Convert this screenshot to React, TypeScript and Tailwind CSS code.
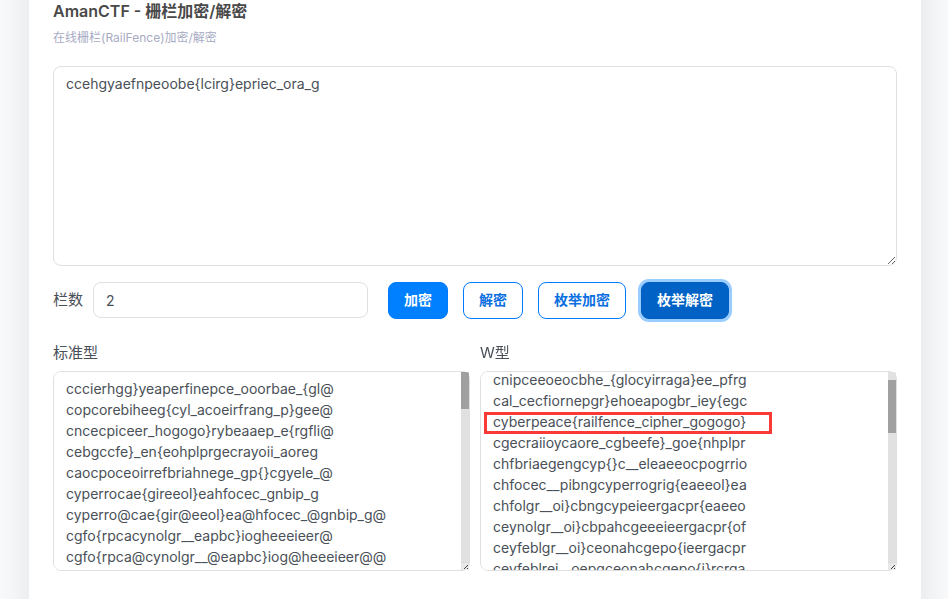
import { useLayoutEffect, useRef, useState } from "react";

const SOURCE = "ccehgyaefnpeoobe{lcirg}epriec_ora_g";

/** Standard rail fence: the text is cut into equal rails and read by column. */
function decodeStandard(text: string, rails: number): string {
  const columns = Math.ceil(text.length / rails);
  const padded = text.padEnd(columns * rails, "@");
  let out = "";
  for (let c = 0; c < columns; c++) {
    for (let r = 0; r < rails; r++) out += padded[r * columns + c];
  }
  return out;
}

/** W-shaped rail fence: the text zigzags between the first and last rail. */
function decodeZigzag(text: string, rails: number): string {
  const period = 2 * (rails - 1);
  const order: number[] = [];
  for (let r = 0; r < rails; r++) {
    for (let i = 0; i < text.length; i++) {
      const m = i % period;
      if (Math.min(m, period - m) === r) order.push(i);
    }
  }
  const out: string[] = [];
  order.forEach((position, i) => {
    out[position] = text[i];
  });
  return out.join("");
}

function enumerate(decode: (text: string, rails: number) => string): string {
  const lines: string[] = [];
  for (let rails = 2; rails < SOURCE.length; rails++) lines.push(decode(SOURCE, rails));
  return lines.join("\n");
}

const fieldClass =
  "block w-full rounded-lg border border-[#e0e0e0] bg-white px-3 text-sm leading-[21px] text-[#495057] outline-none";

const buttonClass = "h-[37px] rounded-lg border px-[15px] pb-0.5 text-sm font-bold";
const outlineButton = `${buttonClass} border-[#007bff] bg-white text-[#0a6fe0]`;

function ResultArea({ id, label, value, scroll = 0 }: { id: string; label: string; value: string; scroll?: number }) {
  const ref = useRef<HTMLTextAreaElement>(null);
  const [thumb, setThumb] = useState({ top: 0, height: 0 });

  const measure = () => {
    const area = ref.current;
    if (!area) return;
    const track = area.clientHeight - 8;
    setThumb({
      top: Math.round((track * area.scrollTop) / area.scrollHeight),
      height: Math.round((track * area.clientHeight) / area.scrollHeight),
    });
  };

  useLayoutEffect(() => {
    if (ref.current) ref.current.scrollTop = scroll;
    measure();
  }, [scroll]);

  return (
    <div className="min-w-0 flex-1">
      <label htmlFor={id} className="mb-[7px] block text-[15px] leading-[22px]">
        {label}
      </label>
      <div className="relative">
        <textarea
          id={id}
          ref={ref}
          readOnly
          value={value}
          onScroll={measure}
          className={`${fieldClass} h-[200px] resize-none overflow-y-scroll py-1.5 pr-5 [scrollbar-width:none]`}
        />
        <div className="pointer-events-none absolute inset-y-px right-px flex w-2 flex-col overflow-hidden rounded-r-xs">
          <div className="flex-1 bg-[#e1e1e1]">
            <div className="bg-[#a0a0a0]" style={{ height: thumb.height, marginTop: 0, transform: `translateY(${thumb.top}px)` }} />
          </div>
          <svg viewBox="0 0 8 8" className="size-2 bg-[#dcdcdc]" shapeRendering="crispEdges">
            <rect x="0" y="1" width="8" height="7" fill="#e8e8e8" />
            <path d="M3 6h1v1h-1zM4 5h1v1h-1zM5 4h1v1h-1zM6 3h1v1h-1zM6 6h1v1h-1z" fill="#404040" />
          </svg>
        </div>
      </div>
    </div>
  );
}

export default function App() {
  const [text, setText] = useState(SOURCE);
  const [rails, setRails] = useState("2");

  return (
    <div className="h-screen overflow-hidden bg-[#fafbfd] font-['Inter','Noto_Sans_CJK_SC',sans-serif] text-[#495057]">
      <main className="-mt-12 mr-[27px] ml-[29px] min-h-[calc(100vh+96px)] bg-white px-6 pt-12 shadow-[0_0_40px_rgba(0,0,0,0.11)]">
        <h1 className="text-base leading-[22px] font-semibold text-[#494949]">AmanCTF - 栅栏加密/解密</h1>
        <p className="mt-[7px] text-xs leading-[18px] text-[#a7abc3]">在线栅栏(RailFence)加密/解密</p>

        <textarea
          aria-label="AmanCTF"
          value={text}
          onChange={(e) => setText(e.target.value)}
          className={`${fieldClass} mt-[19px] h-[200px] resize py-1.5`}
        />

        <div className="mt-4 flex items-start">
          <label htmlFor="rails" className="mr-[10px] text-[15px] leading-9">
            栏数
          </label>
          <div className="mr-5 w-[275px]">
            <input
              id="rails"
              value={rails}
              onChange={(e) => setRails(e.target.value)}
              className={`${fieldClass} h-9`}
            />
          </div>
          <div className="flex gap-[15px]">
            <button type="button" className={`${buttonClass} border-[#007bff] bg-[#0080ff] text-white`}>
              加密
            </button>
            <button type="button" className={outlineButton}>
              解密
            </button>
            <button type="button" className={outlineButton}>
              枚举加密
            </button>
            <button
              type="button"
              className={`${buttonClass} border-[#005fbf] bg-[#0062c4] text-white ring-3 ring-[#99ccff]`}
            >
              枚举解密
            </button>
          </div>
        </div>

        <div className="mt-[23px] flex gap-[10px]">
          <ResultArea id="standard" label="标准型" value={enumerate(decodeStandard)} />
          <div className="relative flex min-w-0 flex-1">
            <ResultArea id="zigzag" label="W型" value={enumerate(decodeZigzag)} scroll={30} />
            <div className="pointer-events-none absolute top-[70px] left-1 h-[22px] w-72 border-3 border-[#f93a37]" />
          </div>
        </div>
      </main>
    </div>
  );
}
